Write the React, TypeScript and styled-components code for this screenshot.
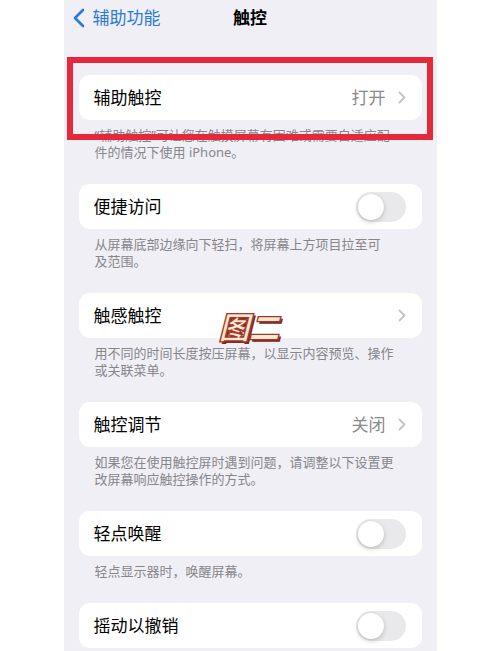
import React from 'react';
import styled, { createGlobalStyle } from 'styled-components';

const GlobalStyle = createGlobalStyle`
  html, body {
    margin: 0;
    padding: 0;
    background: #ffffff;
  }
  body {
    font-family: "Noto Sans", "Noto Sans CJK SC", sans-serif;
    -webkit-font-smoothing: antialiased;
  }
`;

const Screen = styled.div`
  position: relative;
  width: 373px;
  height: 651px;
  margin: 0 auto;
  background: #f0eff5;
  overflow: hidden;
`;

const NavBar = styled.div`
  height: 36px;
  display: grid;
  grid-template-columns: 1fr auto 1fr;
  align-items: center;
`;

const BackLink = styled.div`
  display: flex;
  align-items: center;
  gap: 8px;
  padding-left: 9px;
  color: #2a7ad8;
  font-size: 17px;
  line-height: 20px;
`;

const Title = styled.div`
  font-size: 17px;
  line-height: 20px;
  font-weight: 600;
  color: #000;
`;

const Content = styled.div`
  padding: 39px 15px 0;
`;

const Card = styled.div`
  height: 45px;
  display: flex;
  align-items: center;
  justify-content: space-between;
  padding: 0 16px 0 15px;
  background: #ffffff;
  border-radius: 11px;
`;

const Label = styled.span`
  font-size: 17px;
  line-height: 20px;
  color: #000;
`;

const Trailing = styled.div`
  display: flex;
  align-items: center;
  gap: 12px;
`;

const Value = styled.span`
  font-size: 17px;
  line-height: 20px;
  color: #8a8a8e;
`;

const Caption = styled.p`
  margin: 0 0 23px;
  padding: 7px 24px 0 16px;
  font-size: 13px;
  line-height: 17px;
  color: #86868b;
`;

const Track = styled.div<{ on: boolean }>`
  position: relative;
  width: 50px;
  height: 30px;
  border-radius: 15px;
  background: ${p => (p.on ? '#34c759' : '#e9e9eb')};
`;

const Knob = styled.div<{ on: boolean }>`
  position: absolute;
  top: 2px;
  left: ${p => (p.on ? '22px' : '2px')};
  width: 26px;
  height: 26px;
  border-radius: 50%;
  background: #ffffff;
  box-shadow: 0 2px 5px rgba(0, 0, 0, 0.18), 0 0 1px rgba(0, 0, 0, 0.12);
`;

const Highlight = styled.div`
  position: absolute;
  left: 3.5px;
  top: 57px;
  width: 366px;
  height: 83px;
  box-sizing: border-box;
  border: 6.5px solid #e6283b;
  pointer-events: none;
`;

const Stamp = styled.div`
  position: absolute;
  left: 155px;
  top: 310px;
  font-size: 31px;
  line-height: 34px;
  font-weight: 900;
  font-style: italic;
  letter-spacing: -1px;
  color: #fbe8cf;
  -webkit-text-stroke: 1.3px #a3372c;
  text-shadow: 2px 2px 0 #7a2a22;
  pointer-events: none;
`;

const Chevron = () => (
  <svg width="8" height="13" viewBox="0 0 8 13">
    <path d="M1.5 1.5 L6.5 6.5 L1.5 11.5" fill="none" stroke="#c4c4c7" strokeWidth="1.8" strokeLinecap="round" strokeLinejoin="round" />
  </svg>
);

const BackChevron = () => (
  <svg width="12" height="20" viewBox="0 0 12 20">
    <path d="M10 2 L2 10 L10 18" fill="none" stroke="#2a7ad8" strokeWidth="2.6" strokeLinecap="round" strokeLinejoin="round" />
  </svg>
);

const Toggle = ({ on }: { on: boolean }) => (
  <Track on={on}>
    <Knob on={on} />
  </Track>
);

interface RowProps {
  label: string;
  value?: string;
  toggle?: boolean;
}

const Row = ({ label, value, toggle }: RowProps) => (
  <Card>
    <Label>{label}</Label>
    {toggle ? (
      <Toggle on={false} />
    ) : (
      <Trailing>
        {value && <Value>{value}</Value>}
        <Chevron />
      </Trailing>
    )}
  </Card>
);

export default function App() {
  return (
    <>
      <GlobalStyle />
      <Screen>
        <NavBar>
          <BackLink>
            <BackChevron />
            辅助功能
          </BackLink>
          <Title>触控</Title>
          <div />
        </NavBar>
        <Content>
          <Row label="辅助触控" value="打开" />
          <Caption>“辅助触控”可让您在触摸屏幕有困难或需要自适应配件的情况下使用 iPhone。</Caption>

          <Row label="便捷访问" toggle />
          <Caption>
            从屏幕底部边缘向下轻扫，将屏幕上方项目拉至可<br />及范围。
          </Caption>

          <Row label="触感触控" />
          <Caption>用不同的时间长度按压屏幕，以显示内容预览、操作或关联菜单。</Caption>

          <Row label="触控调节" value="关闭" />
          <Caption>如果您在使用触控屏时遇到问题，请调整以下设置更改屏幕响应触控操作的方式。</Caption>

          <Row label="轻点唤醒" toggle />
          <Caption>轻点显示器时，唤醒屏幕。</Caption>

          <Row label="摇动以撤销" toggle />
        </Content>
        <Highlight />
        <Stamp>图二</Stamp>
      </Screen>
    </>
  );
}
